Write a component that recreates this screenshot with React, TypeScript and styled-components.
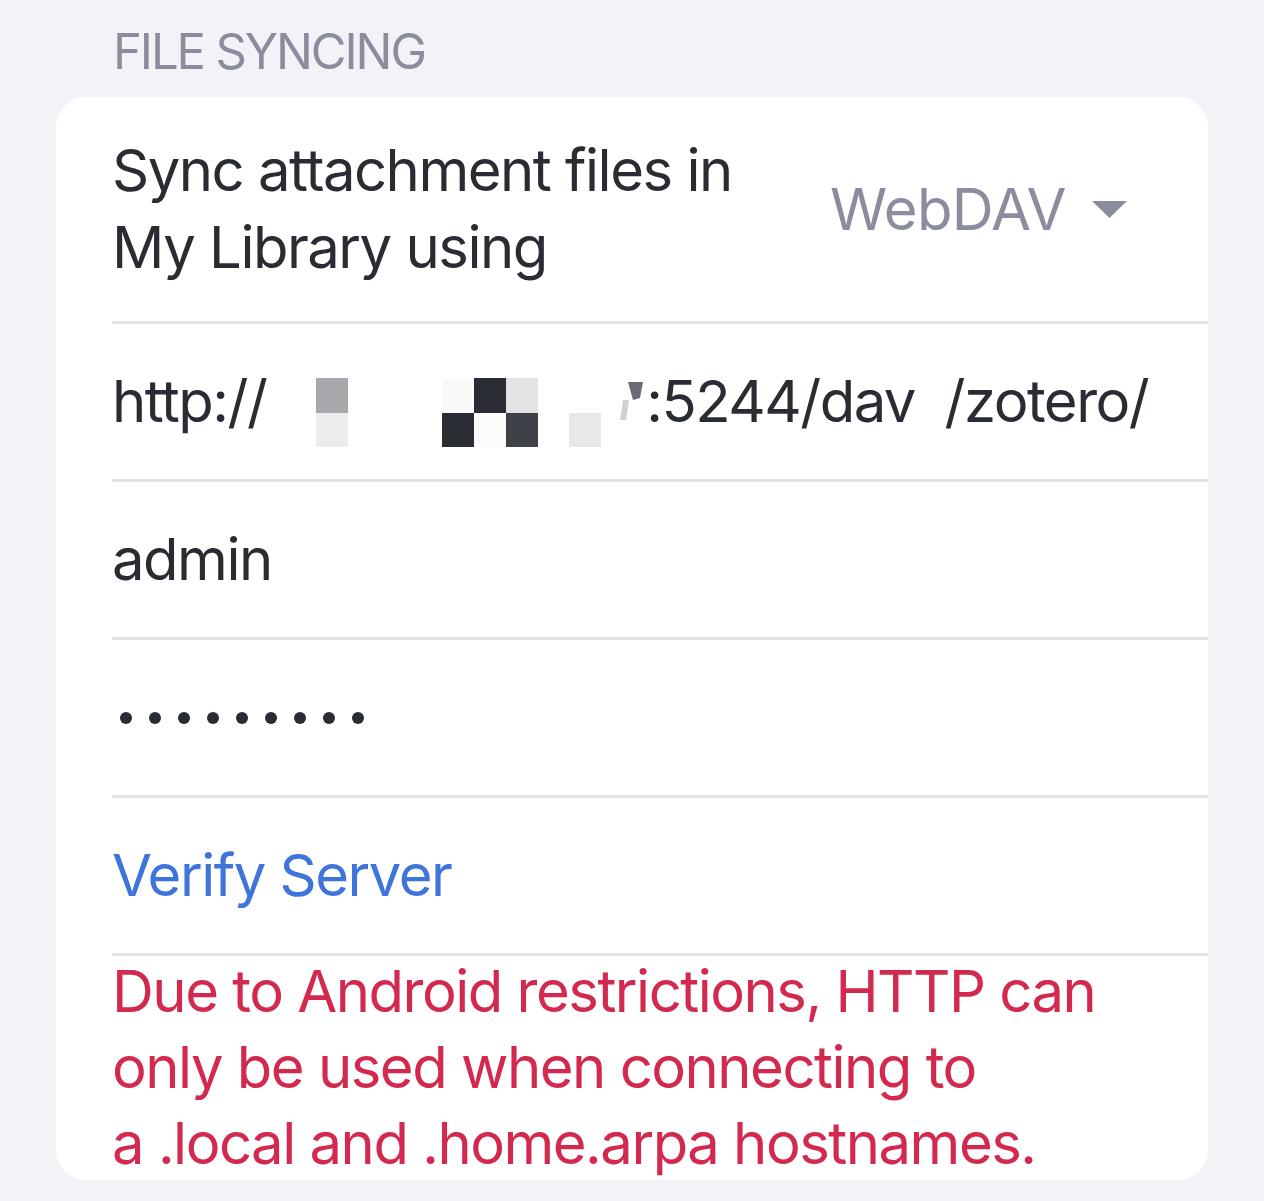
import styled, { createGlobalStyle } from 'styled-components';

const GlobalStyle = createGlobalStyle`
  html, body {
    margin: 0;
    padding: 0;
    background: #f2f2f7;
  }
  body {
    font-family: Inter, "Noto Sans", "Liberation Sans", sans-serif;
    -webkit-font-smoothing: antialiased;
  }
`;

const Page = styled.div`
  width: 1264px;
  height: 1201px;
  overflow: hidden;
  box-sizing: border-box;
  padding: 0 56px;
  background: #f2f2f7;
`;

const SectionTitle = styled.div`
  padding: 22px 0 0 57px;
  height: 97px;
  box-sizing: border-box;
  font-size: 49px;
  line-height: 60px;
  letter-spacing: -2.1px;
  color: #8b8d9f;
  text-transform: uppercase;
`;

const Card = styled.div`
  background: #ffffff;
  border-radius: 30px;
  height: 1083px;
  overflow: hidden;
  display: flex;
  flex-direction: column;
`;

const Row = styled.div<{ $height: number }>`
  margin-left: 56px;
  height: ${(p) => p.$height}px;
  flex-shrink: 0;
  box-sizing: border-box;
  display: flex;
  align-items: center;
  justify-content: space-between;
  padding-right: 81px;
  border-bottom: 3px solid #e2e2e7;
`;

const Text = styled.div<{ $tone?: 'main' | 'link' | 'error' | 'muted' }>`
  font-size: 58px;
  line-height: 77px;
  letter-spacing: -1.5px;
  white-space: pre;
  color: ${(p) =>
    p.$tone === 'link'
      ? '#3f74db'
      : p.$tone === 'error'
      ? '#d3294f'
      : p.$tone === 'muted'
      ? '#8b8d9f'
      : '#2a2c33'};
`;

const Label = styled(Text)`
  white-space: normal;
  width: 660px;
`;

const Message = styled(Text)`
  white-space: normal;
  line-height: 76px;
  margin-top: -3px;
`;

const Picker = styled.div`
  display: flex;
  align-items: center;
  gap: 26px;

  ${Text} {
    letter-spacing: -0.6px;
  }
`;

const UrlLine = styled.div`
  display: flex;
  align-items: center;
`;

const Dots = styled.div`
  display: flex;
  gap: 17px;
  padding-left: 8px;
`;

const Dot = styled.span`
  width: 12px;
  height: 12px;
  border-radius: 50%;
  background: #2a2c33;
`;

const Notice = styled.div`
  margin-left: 56px;
  padding-right: 60px;
`;

// pixelated redaction over part of the host name
const Mosaic = () => (
  <svg width="380" height="90" viewBox="0 0 380 90" style={{ display: 'block' }}>
    <rect x="50" y="21" width="32" height="35" fill="#a8a8ad" />
    <rect x="50" y="56" width="32" height="34" fill="#ececef" />
    <rect x="176" y="21" width="32" height="35" fill="#fafafb" />
    <rect x="208" y="21" width="32" height="35" fill="#2b2d35" />
    <rect x="240" y="21" width="32" height="35" fill="#e3e3e6" />
    <rect x="176" y="56" width="32" height="34" fill="#2b2d35" />
    <rect x="208" y="56" width="32" height="34" fill="#fbfbfc" />
    <rect x="240" y="56" width="32" height="34" fill="#3f4148" />
    <rect x="303" y="56" width="32" height="34" fill="#e8e8ea" />
    <polygon points="362,25 377,25 374,41 367,43" fill="#6b6d74" />
    <polygon points="357,43 363,43 360,63 354,63" fill="#d0d0d4" />
  </svg>
);

const Caret = () => (
  <svg width="35" height="17" viewBox="0 0 35 17">
    <path d="M0 0 H35 L17.5 17 Z" fill="#8b8d9f" />
  </svg>
);

export default function App() {
  const dots = Array.from({ length: 9 });
  return (
    <>
      <GlobalStyle />
      <Page>
        <SectionTitle>File Syncing</SectionTitle>
        <Card>
          <Row $height={227}>
            <Label>Sync attachment files in My Library using</Label>
            <Picker>
              <Text $tone="muted">WebDAV</Text>
              <Caret />
            </Picker>
          </Row>
          <Row $height={158}>
            <UrlLine>
              <Text>http://</Text>
              <Mosaic />
              <Text>{':5244/dav  /zotero/'}</Text>
            </UrlLine>
          </Row>
          <Row $height={158}>
            <Text>admin</Text>
          </Row>
          <Row $height={158}>
            <Dots>
              {dots.map((_, i) => (
                <Dot key={i} />
              ))}
            </Dots>
          </Row>
          <Row $height={158}>
            <Text $tone="link">Verify Server</Text>
          </Row>
          <Notice>
            <Message $tone="error">
              Due to Android restrictions, HTTP can
              <br />
              only be used when connecting to
              <br />a .local and .home.arpa hostnames.
            </Message>
          </Notice>
        </Card>
      </Page>
    </>
  );
}
